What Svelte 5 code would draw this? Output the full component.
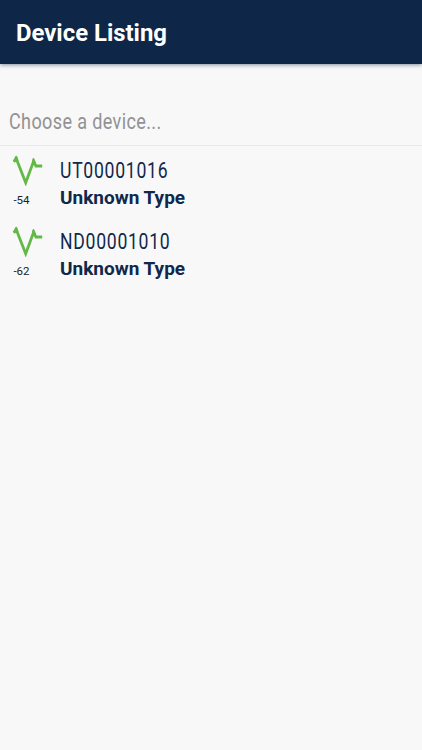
<script>
  const devices = [
    { name: 'UT00001016', type: 'Unknown Type', signal: -54 },
    { name: 'ND00001010', type: 'Unknown Type', signal: -62 }
  ];
</script>

<main>
  <header><h1>Device Listing</h1></header>
  <p class="prompt"><span>Choose a device...</span></p>
  <ul>
    {#each devices as device}
      <li>
        <div class="signal">
          <svg viewBox="0 0 32 32" width="32" height="32" aria-hidden="true">
            <path d="M1.7 7.7L4.4 5L13.7 28.7L21.5 7.5L24 12H30.2" />
            <path class="tips" d="M1 7L3.3 2.2Q4.5 1 5.4 3L6.5 6.5L4 8ZM20 6.5L20.7 4.5Q21.8 3.4 22.5 5L24 9L22 10Z" />
          </svg>
          <small>{device.signal}</small>
        </div>
        <div class="info">
          <span class="name">{device.name}</span>
          <strong>{device.type}</strong>
        </div>
      </li>
    {/each}
  </ul>
</main>

<style>
  :global(body) { margin: 0; background: #f8f8f8; }
  main {
    height: 750px;
    overflow: hidden;
    background: #f8f8f8;
    color: #10284b;
    font-family: Roboto, sans-serif;
  }
  header {
    height: 64px;
    box-sizing: border-box;
    padding: 1px 0 0 16px;
    display: flex;
    align-items: center;
    background: #0e2748;
    box-shadow: 0 1px 4px rgba(14, 39, 72, 0.5);
  }
  h1 { margin: 0; color: #fff; font-size: 23.9px; line-height: 28px; font-weight: 700; }
  .prompt {
    margin: 0;
    height: 82px;
    box-sizing: border-box;
    padding: 45px 0 0 9px;
    border-bottom: 1px solid #e9e9e9;
    color: #929292;
    font-size: 22px;
    line-height: 26px;
  }
  .prompt span, .name { display: block; transform-origin: left; white-space: nowrap; }
  .prompt span { transform: scaleX(0.82); letter-spacing: 0.45px; }
  ul { list-style: none; margin: 0; padding: 0; }
  li { height: 71px; display: flex; }
  .signal { width: 60px; padding: 8px 0 0 12px; box-sizing: border-box; }
  svg { display: block; fill: none; stroke: #62b946; stroke-width: 2.8; stroke-linejoin: miter; }
  .tips { fill: #62b946; stroke: none; }
  small { display: block; margin: 7px 0 0 1.4px; color: #222; font-size: 11.5px; line-height: 15px; }
  .info { padding-top: 11px; }
  .name { font-size: 22px; line-height: 27px; transform: scaleX(0.8); letter-spacing: 0.9px; }
  strong { display: block; font-size: 19px; line-height: 27px; }
</style>
